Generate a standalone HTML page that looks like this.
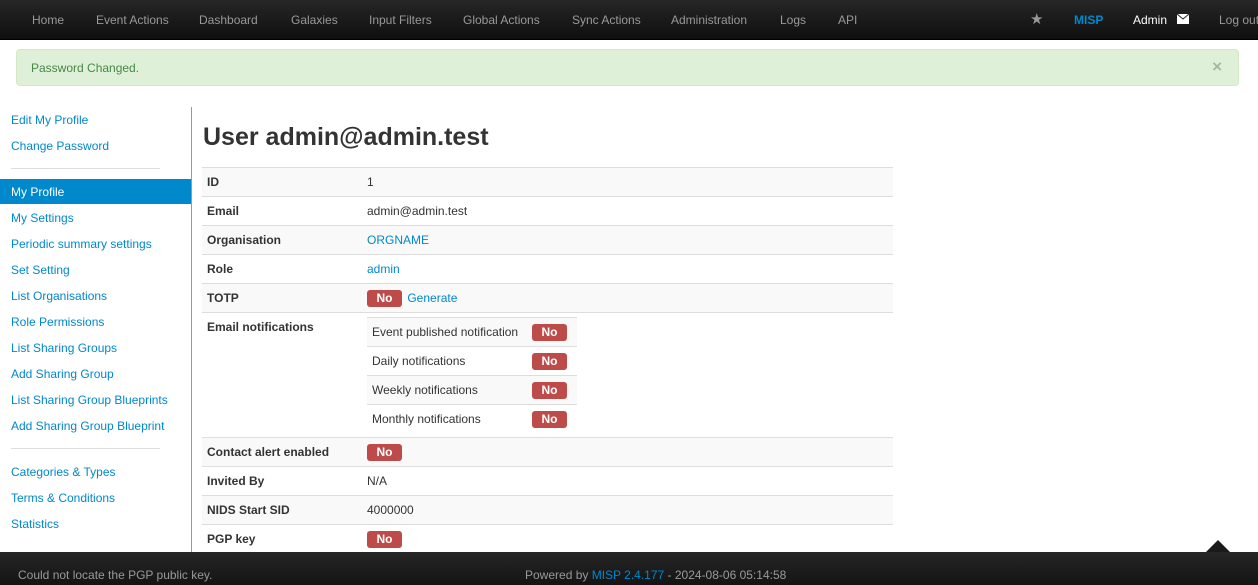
<!DOCTYPE html><html><head><style>
*{box-sizing:border-box;margin:0;padding:0}
body{width:1258px;height:585px;overflow:hidden;font-family:"Liberation Sans",sans-serif;font-size:12px;color:#333;background:#fff;position:relative}
a{color:#0088cc;text-decoration:none}
.nav{position:absolute;left:0;top:0;width:1258px;height:40px;background:linear-gradient(#262626,#0f0f0f);border-bottom:1px solid #000}
.nav span{position:absolute;top:13px;color:#999;font-size:12px;white-space:nowrap}
.alert{position:absolute;left:16px;top:49px;width:1223px;height:37px;background:#dff0d8;border:1px solid #d6e9c6;border-radius:4px;color:#468847;font-size:12px;padding:11px 14px}
.alert b{position:absolute;right:16px;top:7px;color:#a6b8a0;font-size:17px}
.side{position:absolute;left:0;top:107px;width:192px;height:445px;border-right:1px solid #999}
.side a{position:absolute;left:11px;font-size:12px}
.side .act{left:0;width:191px;height:25px;background:#0088cc;color:#fff;padding:6px 11px}
.side hr{position:absolute;left:11px;width:149px;border:0;border-top:1px solid #ddd}
h2{position:absolute;left:203px;top:123px;font-size:25px;font-weight:bold;color:#333}
.r{position:absolute;left:202px;width:691px;border-top:1px solid #ddd;height:29px}
.r.g{background:#f9f9f9}
.r .k{position:absolute;left:5px;top:7px;font-weight:bold}
.r .v{position:absolute;left:165px;top:7px}
.no{display:inline-block;background:#bd4b4a;color:#fff;font-weight:bold;border-radius:3px;width:35px;height:17px;text-align:center;line-height:17px;font-size:12px}
.n{position:absolute;left:367px;width:210px;height:29px;border-top:1px solid #ddd}
.n.g{background:#f9f9f9}
.n span{position:absolute;left:5px;top:7px}
.n .no{position:absolute;left:165px;top:6px}
.foot{position:absolute;left:0;top:552px;width:1258px;height:33px;background:linear-gradient(#262626,#141414);color:#999;font-size:12px}
</style></head><body>
<div class="nav">
<span style="left:32px">Home</span><span style="left:96px">Event Actions</span><span style="left:199px">Dashboard</span><span style="left:291px">Galaxies</span><span style="left:369px">Input Filters</span><span style="left:463px">Global Actions</span><span style="left:572px">Sync Actions</span><span style="left:671px">Administration</span><span style="left:780px">Logs</span><span style="left:838px">API</span>
<span style="left:1030px;top:10px;font-size:15px">★</span>
<span style="left:1074px;color:#0088cc;font-weight:bold;font-size:12px;top:13px">MISP</span>
<span style="left:1133px;color:#fff">Admin</span>
<svg style="position:absolute;left:1177px;top:14px" width="12" height="10"><rect width="12" height="10" fill="#fff"/><path d="M0 0L6 5L12 0" stroke="#222" fill="none"/></svg>
<span style="left:1219px">Log out</span>
</div>
<div class="alert">Password Changed.<b>×</b></div>
<div class="side">
<a style="top:6px">Edit My Profile</a><a style="top:32px">Change Password</a>
<hr style="top:61px">
<a class="act" style="top:72px">My Profile</a>
<a style="top:104px">My Settings</a><a style="top:130px">Periodic summary settings</a><a style="top:156px">Set Setting</a><a style="top:182px">List Organisations</a><a style="top:208px">Role Permissions</a><a style="top:234px">List Sharing Groups</a><a style="top:260px">Add Sharing Group</a><a style="top:286px">List Sharing Group Blueprints</a><a style="top:312px">Add Sharing Group Blueprint</a>
<hr style="top:341px">
<a style="top:358px">Categories &amp; Types</a><a style="top:384px">Terms &amp; Conditions</a><a style="top:410px">Statistics</a>
</div>
<h2>User admin@admin.test</h2>
<div class="r g" style="top:167px"><span class="k">ID</span><span class="v">1</span></div>
<div class="r" style="top:196px"><span class="k">Email</span><span class="v">admin@admin.test</span></div>
<div class="r g" style="top:225px"><span class="k">Organisation</span><a class="v">ORGNAME</a></div>
<div class="r" style="top:254px"><span class="k">Role</span><a class="v">admin</a></div>
<div class="r g" style="top:283px"><span class="k">TOTP</span><span class="v" style="top:6px"><span class="no">No</span> <a style="font-weight:normal;margin-left:2px">Generate</a></span></div>
<div class="r" style="top:312px;height:125px"><span class="k">Email notifications</span></div>
<div class="n g" style="top:317px"><span>Event published notification</span><b class="no">No</b></div>
<div class="n" style="top:346px"><span>Daily notifications</span><b class="no">No</b></div>
<div class="n g" style="top:375px"><span>Weekly notifications</span><b class="no">No</b></div>
<div class="n" style="top:404px"><span>Monthly notifications</span><b class="no">No</b></div>
<div class="r g" style="top:437px"><span class="k">Contact alert enabled</span><span class="v" style="top:6px"><span class="no">No</span></span></div>
<div class="r" style="top:466px"><span class="k">Invited By</span><span class="v">N/A</span></div>
<div class="r g" style="top:495px"><span class="k">NIDS Start SID</span><span class="v">4000000</span></div>
<div class="r" style="top:524px"><span class="k">PGP key</span><span class="v" style="top:6px"><span class="no">No</span></span></div>
<svg style="position:absolute;left:1205px;top:540px" width="26" height="13"><path d="M0 13L13 0L26 13Z" fill="#1a1a1a"/></svg>
<div class="foot"><span style="position:absolute;left:18px;top:16px">Could not locate the PGP public key.</span><span style="position:absolute;left:525px;top:16px">Powered by <a>MISP 2.4.177</a> - 2024-08-06 05:14:58</span></div>
</body></html>
